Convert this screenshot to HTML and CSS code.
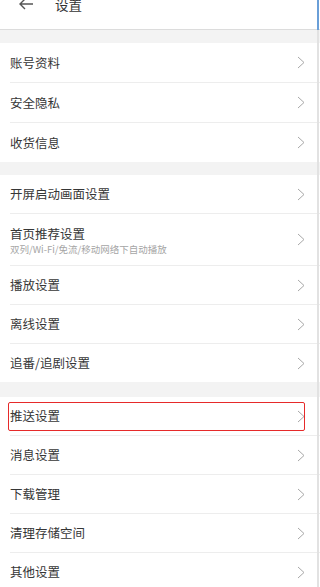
FILE: index.html
```html
<!DOCTYPE html>
<html lang="zh-CN">
<head>
<meta charset="utf-8">
<title>设置</title>
<link rel="stylesheet" href="styles.css">
</head>
<body>
<div class="page">
  <header class="topbar">
    <div class="topbar-inner">
      <svg class="back" width="16" height="12" viewBox="0 0 16 12"><path d="M15 6H2M7 1L2 6l5 5" fill="none" stroke="#555" stroke-width="1.4"/></svg>
      <span class="title">设置</span>
    </div>
  </header>

  <div class="group g1">
    <div class="row"><span class="label">账号资料</span><svg class="chev" width="8" height="13" viewBox="0 0 8 13"><path d="M1 1l6 5.5L1 12" fill="none" stroke="#a8a8a8" stroke-width="1"/></svg></div>
    <div class="row"><span class="label">安全隐私</span><svg class="chev" width="8" height="13" viewBox="0 0 8 13"><path d="M1 1l6 5.5L1 12" fill="none" stroke="#a8a8a8" stroke-width="1"/></svg></div>
    <div class="row"><span class="label">收货信息</span><svg class="chev" width="8" height="13" viewBox="0 0 8 13"><path d="M1 1l6 5.5L1 12" fill="none" stroke="#a8a8a8" stroke-width="1"/></svg></div>
  </div>

  <div class="group g2">
    <div class="row"><span class="label">开屏启动画面设置</span><svg class="chev" width="8" height="13" viewBox="0 0 8 13"><path d="M1 1l6 5.5L1 12" fill="none" stroke="#a8a8a8" stroke-width="1"/></svg></div>
    <div class="row tall"><div class="texts"><span class="label">首页推荐设置</span><span class="sub">双列/Wi-Fi/免流/移动网络下自动播放</span></div><svg class="chev" width="8" height="13" viewBox="0 0 8 13"><path d="M1 1l6 5.5L1 12" fill="none" stroke="#a8a8a8" stroke-width="1"/></svg></div>
    <div class="row"><span class="label">播放设置</span><svg class="chev" width="8" height="13" viewBox="0 0 8 13"><path d="M1 1l6 5.5L1 12" fill="none" stroke="#a8a8a8" stroke-width="1"/></svg></div>
    <div class="row"><span class="label">离线设置</span><svg class="chev" width="8" height="13" viewBox="0 0 8 13"><path d="M1 1l6 5.5L1 12" fill="none" stroke="#a8a8a8" stroke-width="1"/></svg></div>
    <div class="row"><span class="label">追番/追剧设置</span><svg class="chev" width="8" height="13" viewBox="0 0 8 13"><path d="M1 1l6 5.5L1 12" fill="none" stroke="#a8a8a8" stroke-width="1"/></svg></div>
  </div>

  <div class="group g3">
    <div class="row"><span class="label">推送设置</span><svg class="chev" width="8" height="13" viewBox="0 0 8 13"><path d="M1 1l6 5.5L1 12" fill="none" stroke="#a8a8a8" stroke-width="1"/></svg><div class="highlight"></div></div>
    <div class="row"><span class="label">消息设置</span><svg class="chev" width="8" height="13" viewBox="0 0 8 13"><path d="M1 1l6 5.5L1 12" fill="none" stroke="#a8a8a8" stroke-width="1"/></svg></div>
    <div class="row"><span class="label">下载管理</span><svg class="chev" width="8" height="13" viewBox="0 0 8 13"><path d="M1 1l6 5.5L1 12" fill="none" stroke="#a8a8a8" stroke-width="1"/></svg></div>
    <div class="row"><span class="label">清理存储空间</span><svg class="chev" width="8" height="13" viewBox="0 0 8 13"><path d="M1 1l6 5.5L1 12" fill="none" stroke="#a8a8a8" stroke-width="1"/></svg></div>
    <div class="row"><span class="label">其他设置</span><svg class="chev" width="8" height="13" viewBox="0 0 8 13"><path d="M1 1l6 5.5L1 12" fill="none" stroke="#a8a8a8" stroke-width="1"/></svg></div>
  </div>

  <div class="scrollbar"><div class="thumb"></div></div>
</div>
</body>
</html>
```

FILE: styles.css
```css
html, body {
  margin: 0;
  padding: 0;
}
body {
  background: #f3f3f3;
  font-family: "Noto Sans CJK SC", "Noto Sans", sans-serif;
  color: #353535;
}
.page {
  position: relative;
  width: 320px;
  height: 587px;
  overflow: hidden;
  background: #f3f3f3;
}
.topbar {
  height: 29px;
  background: #fff;
  border-bottom: 1px solid #dcdcdc;
  overflow: hidden;
}
.topbar-inner {
  display: flex;
  align-items: center;
  height: 20px;
  margin-top: -6px;
  padding-left: 18px;
}
.back {
  display: block;
}
.title {
  margin-left: 21px;
  font-size: 13.5px;
  line-height: 20px;
  color: #333;
}
.group {
  background: #fff;
  padding-left: 10px;
}
.g1 { margin-top: 13px; }
.g2 { margin-top: 13px; }
.g3 { margin-top: 15px; }
.row {
  position: relative;
  display: flex;
  align-items: center;
  justify-content: space-between;
  height: 39px;
  padding-right: 15px;
  border-top: 1px solid #ededed;
  box-sizing: content-box;
}
.row:first-child {
  border-top: none;
}
.g2 .row { height: 38px; }
.g2 .row.tall { height: 51px; }
.g3 .row { height: 38px; }
.label {
  font-size: 12.5px;
  line-height: 18px;
  color: #363636;
}
.texts {
  display: flex;
  flex-direction: column;
  margin-top: 1px;
}
.sub {
  font-size: 9.5px;
  line-height: 13px;
  color: #a5a5a5;
}
.chev {
  display: block;
  flex: none;
}
.highlight {
  position: absolute;
  left: -2px;
  top: 5px;
  width: 295px;
  height: 27px;
  border: 1.5px solid #e62a2a;
  border-radius: 2px;
}
.scrollbar {
  position: absolute;
  top: 0;
  right: 1px;
  width: 2px;
  height: 587px;
  background: #e2e2e2;
}
.thumb {
  width: 2px;
  height: 30px;
  background: #6a9fd8;
}
```
